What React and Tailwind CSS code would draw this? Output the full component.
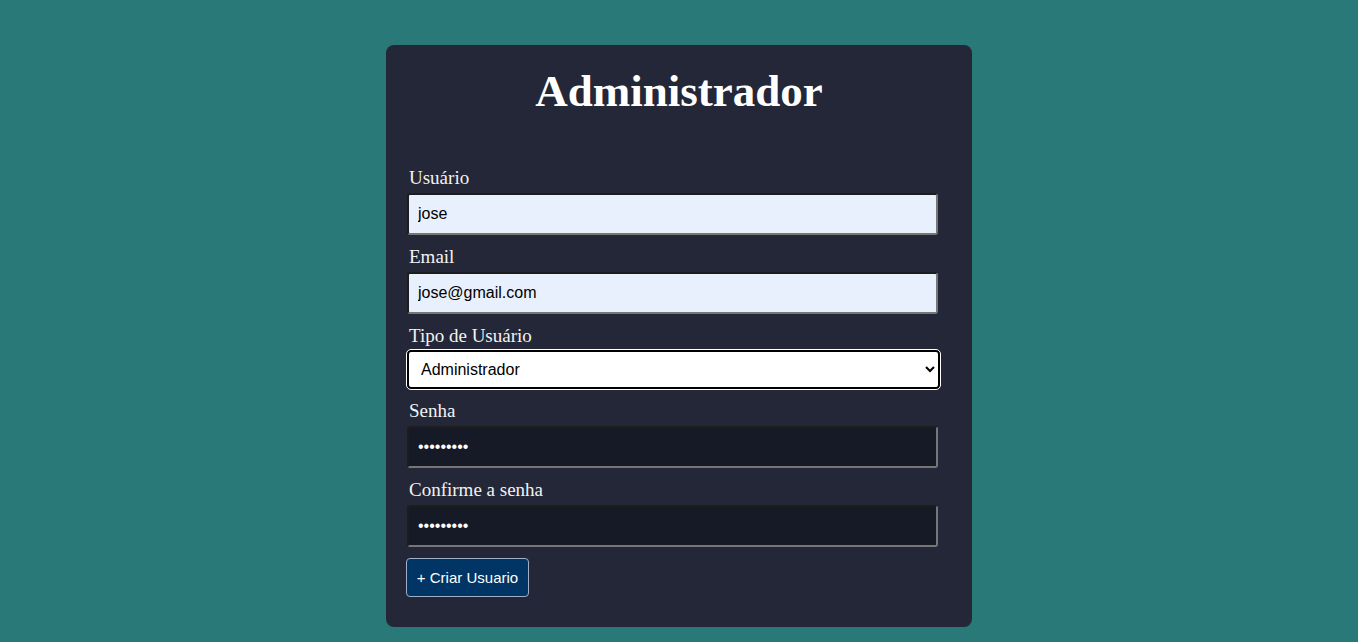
import React from 'react';

const Field = ({ label, children }) => (
    <div className="flex flex-col">
        <label className="pl-[3px] text-[19px] leading-[22px] text-[#f2f2f2] mb-[4px]">{label}</label>
        {children}
    </div>
);

const inputBase =
    "ml-[1px] w-[531px] h-[42px] px-[9px] rounded-[3px] border-2 border-t-[#1d1d1d] border-l-[#1d1d1d] border-b-[#767676] border-r-[#767676] text-[16px] outline-none font-['Liberation_Sans',Arial,sans-serif]";

const App = () => {
    return (
        <div className="min-h-screen w-full bg-[#297979] flex justify-center pt-[45px] font-['Liberation_Serif','Times_New_Roman',serif]">
            <div className="w-[586px] h-[582px] bg-[#242737] rounded-[8px] px-[20px] pt-[21px]">
                <h1 className="text-center text-white font-bold text-[45px] leading-[50px] mb-[51px]">
                    Administrador
                </h1>

                <div className="flex flex-col gap-[11px]">
                    <Field label="Usuário">
                        <input className={`${inputBase} bg-[#e8f0fe] text-black`} defaultValue="jose" />
                    </Field>
                    <Field label="Email">
                        <input className={`${inputBase} bg-[#e8f0fe] text-black`} defaultValue="jose@gmail.com" />
                    </Field>
                    <div className="flex flex-col">
                        <label className="pl-[3px] text-[19px] leading-[22px] text-[#f2f2f2] mb-[3px]">Tipo de Usuário</label>
                        <select
                            defaultValue="admin"
                            className="ml-[1px] w-[533px] h-[39px] pl-[8px] pr-[4px] bg-white text-black border-2 border-black rounded-[4px] outline outline-1 outline-white text-[16px] font-['Liberation_Sans',Arial,sans-serif]"
                        >
                            <option value="admin">Administrador</option>
                            <option value="user">Usuário</option>
                        </select>
                    </div>
                    <Field label="Senha">
                        <input type="password" className={`${inputBase} bg-[#161926] text-white`} defaultValue="123456789" />
                    </Field>
                    <Field label="Confirme a senha">
                        <input type="password" className={`${inputBase} bg-[#161926] text-white`} defaultValue="123456789" />
                    </Field>
                    <div>
                        <button className="h-[39px] w-[123px] pt-[1px] bg-[#003566] border border-[#9fb0c8] rounded-[4px] text-white text-[15px] font-['Liberation_Sans',Arial,sans-serif]">
                            + Criar Usuario
                        </button>
                    </div>
                </div>
            </div>
        </div>
    );
};

export default App;
